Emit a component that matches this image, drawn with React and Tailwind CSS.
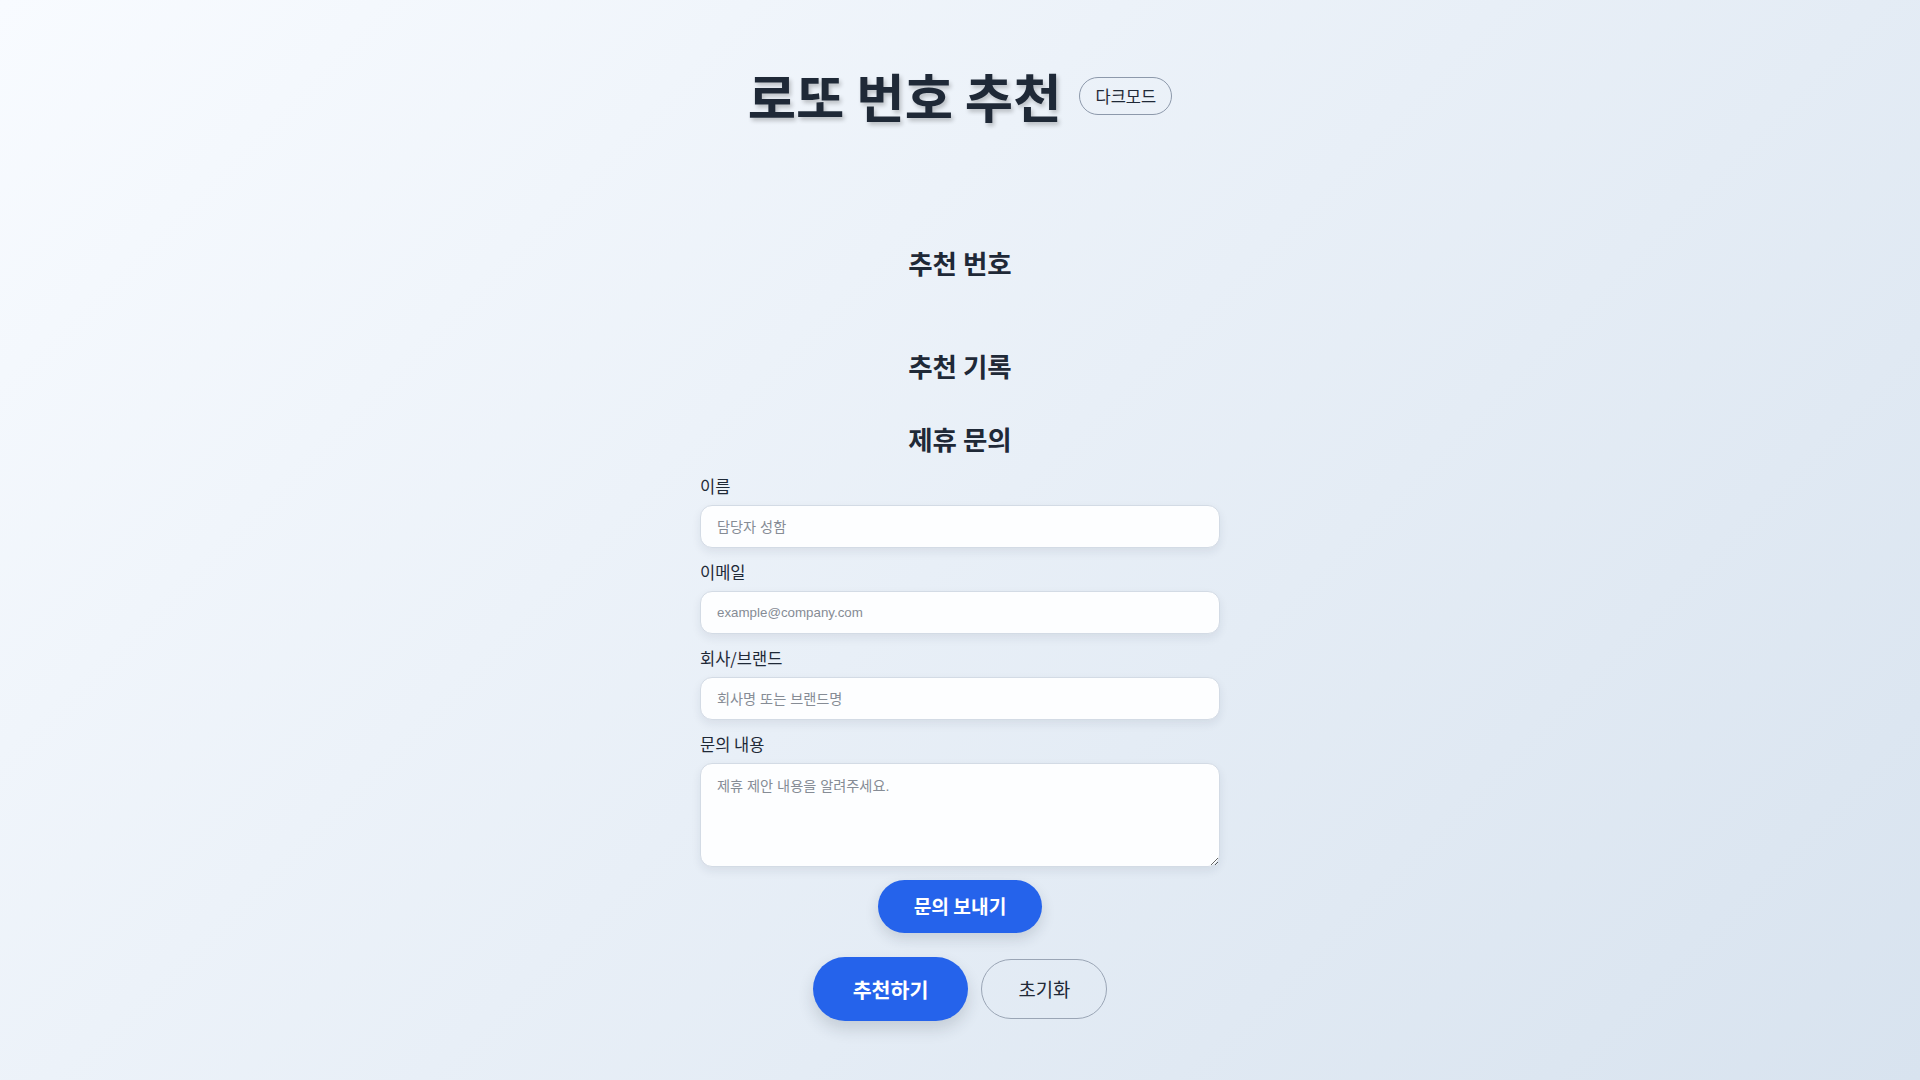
import React, { useState } from 'react';

const fields = [
  { id: 'name', label: '이름', placeholder: '담당자 성함', type: 'text', size: 'text-[14.2px]' },
  { id: 'email', label: '이메일', placeholder: 'example@company.com', type: 'email', size: 'text-[13.33px]' },
  { id: 'company', label: '회사/브랜드', placeholder: '회사명 또는 브랜드명', type: 'text', size: 'text-[14.2px]' },
];

const inputClass =
  "w-full rounded-[12px] border border-[#d3dbe5] bg-[#fdfeff] px-4 text-[#1f2937] font-['Liberation_Sans','Noto_Sans_CJK_KR',sans-serif] shadow-[0_4px_10px_rgba(30,41,59,0.08)] outline-none placeholder:text-[#868c95]";

const App = () => {
  const [dark, setDark] = useState(false);
  const [numbers, setNumbers] = useState([]);

  return (
    <div className="min-h-screen bg-[linear-gradient(135deg,#f8fbff_0%,#d8e3ef_100%)] font-['Noto_Sans_CJK_KR','Noto_Sans',sans-serif] text-[#1f2937]">
      <div className="mx-auto flex max-w-[520px] flex-col items-center pt-[66px] pb-10">
        <header className="flex items-center gap-[18px]">
          <h1 className="text-[52.5px] leading-[58px] font-bold text-[#1f2937] [text-shadow:2px_3px_4px_rgba(0,0,0,0.22)]">
            로또 번호 추천
          </h1>
          <button
            onClick={() => setDark(!dark)}
            className="mt-[2px] rounded-full border border-[#8d99ab] px-[15px] py-[6px] text-[16.5px] leading-[24px] text-[#1f2937]"
          >
            다크모드
          </button>
        </header>

        <section className="mt-[123px] flex w-full flex-col items-center">
          <h2 className="text-[26.5px] leading-[31px] font-bold">추천 번호</h2>
          <div className="flex h-[72px] items-center justify-center gap-3">
            {numbers.map((n) => (
              <span key={n} className="flex h-12 w-12 items-center justify-center rounded-full bg-[#2563eb] font-bold text-white">
                {n}
              </span>
            ))}
          </div>
        </section>

        <section className="flex w-full flex-col items-center">
          <h2 className="text-[26.5px] leading-[31px] font-bold">추천 기록</h2>
          <ul className="h-[42px]"></ul>
        </section>

        <section className="flex w-full flex-col">
          <h2 className="text-center text-[26.5px] leading-[31px] font-bold">제휴 문의</h2>
          <form className="mt-[21px] flex flex-col gap-[13px]" onSubmit={(e) => e.preventDefault()}>
            {fields.map((f) => (
              <div key={f.id} className="flex flex-col">
                <label htmlFor={f.id} className="mb-[8px] text-[16.5px] leading-[22px]">
                  {f.label}
                </label>
                <input id={f.id} type={f.type} placeholder={f.placeholder} className={`${inputClass} ${f.size} h-[43px]`} />
              </div>
            ))}
            <div className="flex flex-col">
              <label htmlFor="message" className="mb-[8px] text-[16.5px] leading-[22px]">
                문의 내용
              </label>
              <textarea
                id="message"
                placeholder="제휴 제안 내용을 알려주세요."
                className={`${inputClass} text-[14.2px] h-[104px] py-[12px]`}
              />
            </div>
            <div className="flex justify-center">
              <button
                type="submit"
                className="h-[53px] rounded-full bg-[#2563eb] px-9 text-[19.2px] font-bold text-white shadow-[0_6px_14px_rgba(30,41,59,0.15)]"
              >
                문의 보내기
              </button>
            </div>
          </form>
        </section>

        <div className="mt-[24px] flex items-center gap-[13px]">
          <button
            onClick={() => setNumbers([3, 11, 19, 27, 34, 42])}
            className="h-[64px] rounded-full bg-[#2563eb] px-[40px] text-[20.6px] font-bold text-white shadow-[0_8px_16px_rgba(30,41,59,0.16)]"
          >
            추천하기
          </button>
          <button
            onClick={() => setNumbers([])}
            className="h-[60px] rounded-full border border-[#9aa5b5] px-[36px] text-[18.8px] text-[#1f2937]"
          >
            초기화
          </button>
        </div>
      </div>
    </div>
  );
};

export default App;
